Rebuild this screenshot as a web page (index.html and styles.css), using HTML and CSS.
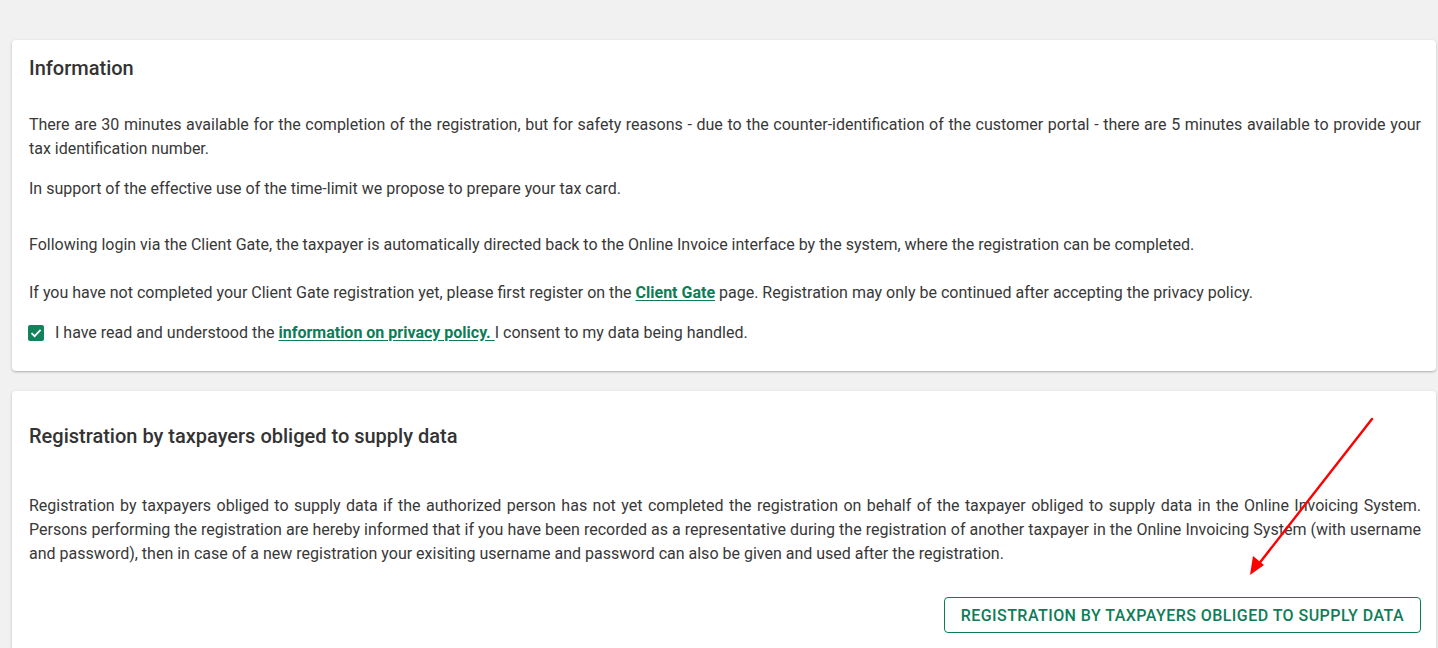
FILE: index.html
```html
<!DOCTYPE html>
<html lang="en">
<head>
<meta charset="utf-8">
<title>Registration</title>
<link rel="stylesheet" href="styles.css">
</head>
<body>
<main class="page">
  <section class="card card-info">
    <h2 class="card-title">Information</h2>
    <p class="text first">There are 30 minutes available for the completion of the registration, but for safety reasons - due to the counter-identification of the customer portal - there are 5 minutes available to provide your tax identification number.</p>
    <p class="text">In support of the effective use of the time-limit we propose to prepare your tax card.</p>
    <p class="text gap-lg">Following login via the Client Gate, the taxpayer is automatically directed back to the Online Invoice interface by the system, where the registration can be completed.</p>
    <p class="text gap-md">If you have not completed your Client Gate registration yet, please first register on the <a class="link" href="#">Client Gate</a> page. Registration may only be continued after accepting the privacy policy.</p>
    <label class="consent">
      <span class="checkbox">
        <svg viewBox="0 0 16 16" width="16" height="16"><path d="M3.5 8.2 L6.6 11.2 L12.6 4.9" fill="none" stroke="#fff" stroke-width="1.8"/></svg>
      </span>
      <span class="consent-text">I have read and understood the <a class="link" href="#">information on privacy policy. </a>I consent to my data being handled.</span>
    </label>
  </section>

  <section class="card card-reg">
    <h2 class="card-title">Registration by taxpayers obliged to supply data</h2>
    <p class="text reg-text">Registration by taxpayers obliged to supply data if the authorized person has not yet completed the registration on behalf of the taxpayer obliged to supply data in the Online Invoicing System. Persons performing the registration are hereby informed that if you have been recorded as a representative during the registration of another taxpayer in the Online Invoicing System (with username and password), then in case of a new registration your exisiting username and password can also be given and used after the registration.</p>
    <div class="actions">
      <button class="btn-outline" type="button">Registration by taxpayers obliged to supply data</button>
    </div>
  </section>
</main>
<svg class="annotation" width="1438" height="648" viewBox="0 0 1438 648">
  <line x1="1372" y1="419" x2="1258" y2="565" stroke="#ff0000" stroke-width="2.4" stroke-linecap="round"/>
  <polygon points="1250,575 1253,556 1264,565" fill="#ff0000"/>
</svg>
</body>
</html>
```
FILE: styles.css
```css
html, body {
  margin: 0;
  padding: 0;
}
body {
  background: #f1f1f1;
  font-family: Roboto, "Noto Sans", "Liberation Sans", sans-serif;
  color: #383838;
  width: 1438px;
  height: 648px;
  overflow: hidden;
  position: relative;
}
.page {
  padding: 40px 2px 0 12px;
  display: flex;
  flex-direction: column;
  gap: 20px;
}
.card {
  background: #ffffff;
  border-radius: 4px;
  box-shadow: 0 1px 3px rgba(0, 0, 0, 0.22), 0 1px 1px rgba(0, 0, 0, 0.08);
  padding: 16px 15px 26px 17px;
}
.card-title {
  margin: 0;
  font-size: 20px;
  line-height: 24px;
  font-weight: 500;
  color: #333333;
}
.text {
  margin: 16px 0 0;
  font-size: 16px;
  line-height: 24px;
  text-align: justify;
}
.text.first {
  margin-top: 33px;
}
.text.gap-lg {
  margin-top: 32px;
}
.text.gap-md {
  margin-top: 24px;
}
.link {
  color: #0e7d57;
  font-weight: 700;
  text-decoration: underline;
  text-underline-offset: 2px;
}
.consent {
  margin-top: 16px;
  display: flex;
  align-items: center;
  gap: 11px;
  font-size: 16px;
  line-height: 24px;
  margin-left: -1px;
}
.checkbox {
  width: 16px;
  height: 16px;
  border-radius: 2px;
  background: #11825a;
  display: flex;
  align-items: center;
  justify-content: center;
}
.checkbox svg {
  display: block;
}
.card-reg {
  padding-top: 33px;
  min-height: 400px;
}
.reg-text {
  margin-top: 46px;
}
.actions {
  display: flex;
  justify-content: flex-end;
  margin-top: 31px;
}
.btn-outline {
  height: 36px;
  padding: 0 16px;
  background: #ffffff;
  border: 1px solid #0e7d57;
  border-radius: 4px;
  color: #0e7d57;
  font-family: Roboto, "Noto Sans", "Liberation Sans", sans-serif;
  font-size: 16px;
  font-weight: 500;
  letter-spacing: 0.45px;
  text-transform: uppercase;
}
.annotation {
  position: absolute;
  left: 0;
  top: 0;
  pointer-events: none;
}
```
